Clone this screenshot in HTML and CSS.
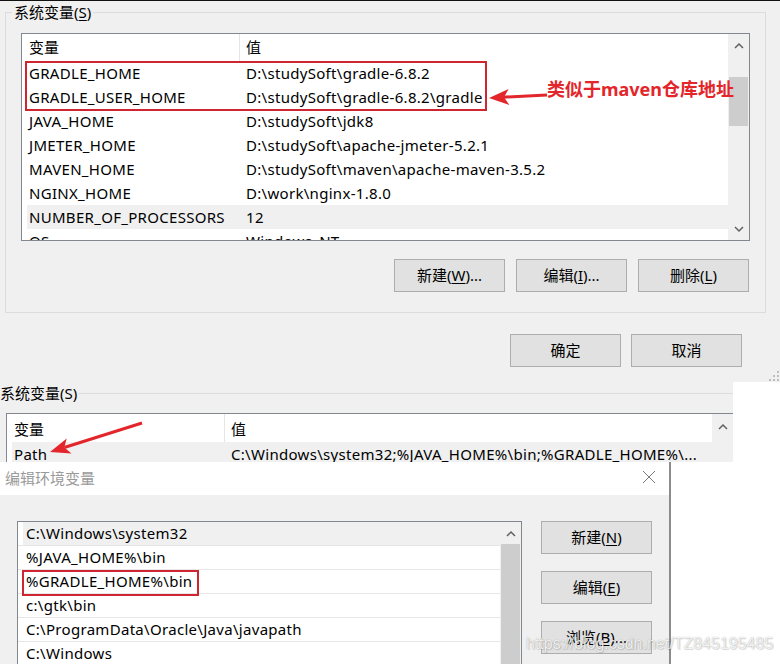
FILE: index.html
```html
<!DOCTYPE html>
<html lang="zh-CN">
<head>
<meta charset="utf-8">
<title>系统变量</title>
<link rel="stylesheet" href="styles.css">
</head>
<body>
<section class="win1">
  <fieldset class="group">
    <legend>系统变量(<u>S</u>)</legend>
    <div class="gbody">
      <div class="listbox lb1">
        <div class="lv">
          <div class="lhead"><span class="c1">变量</span><span class="c2">值</span></div>
          <div class="lrow"><span class="c1">GRADLE_HOME</span><span class="c2">D:\studySoft\gradle-6.8.2</span></div>
          <div class="lrow"><span class="c1">GRADLE_USER_HOME</span><span class="c2">D:\studySoft\gradle-6.8.2\gradle</span></div>
          <div class="lrow"><span class="c1">JAVA_HOME</span><span class="c2">D:\studySoft\jdk8</span></div>
          <div class="lrow"><span class="c1">JMETER_HOME</span><span class="c2">D:\studySoft\apache-jmeter-5.2.1</span></div>
          <div class="lrow"><span class="c1">MAVEN_HOME</span><span class="c2">D:\studySoft\maven\apache-maven-3.5.2</span></div>
          <div class="lrow"><span class="c1">NGINX_HOME</span><span class="c2">D:\work\nginx-1.8.0</span></div>
          <div class="lrow hl"><span class="c1">NUMBER_OF_PROCESSORS</span><span class="c2">12</span></div>
          <div class="lrow"><span class="c1">OS</span><span class="c2">Windows_NT</span></div>
        </div>
        <div class="vscroll">
          <div class="sbtn"><svg width="10" height="7" viewBox="0 0 10 7"><polyline points="1,6 5,2 9,6" fill="none" stroke="#606060" stroke-width="1.5"/></svg></div>
          <div class="track"><div class="thumb t1"></div></div>
          <div class="sbtn"><svg width="10" height="7" viewBox="0 0 10 7"><polyline points="1,1 5,5 9,1" fill="none" stroke="#606060" stroke-width="1.5"/></svg></div>
        </div>
      </div>
      <div class="btnrow">
        <div class="btn">新建(<u>W</u>)...</div>
        <div class="btn">编辑(<u>I</u>)...</div>
        <div class="btn">删除(<u>L</u>)</div>
      </div>
    </div>
  </fieldset>
  <div class="dlgbtns">
    <div class="btn">确定</div>
    <div class="btn">取消</div>
  </div>
</section>

<section class="win2">
  <div class="g2head"><span class="g2label">系统变量(S)</span><span class="g2line"></span></div>
  <div class="listbox lb2">
    <div class="lv">
      <div class="lhead lhead2"><span class="c1">变量</span><span class="c2">值</span></div>
      <div class="lrow hl"><span class="c1">Path</span><span class="c2">C:\Windows\system32;%JAVA_HOME%\bin;%GRADLE_HOME%\...</span></div>
    </div>
    <div class="vscroll">
      <div class="sbtn sbtn2"><svg width="10" height="7" viewBox="0 0 10 7"><polyline points="1,6 5,2 9,6" fill="none" stroke="#606060" stroke-width="1.5"/></svg></div>
      <div class="track"></div>
    </div>
  </div>
</section>

<section class="win3">
  <div class="titlebar">
    <span class="ttl">编辑环境变量</span>
    <svg class="closex" width="14" height="14" viewBox="0 0 14 14"><path d="M1 1 L13 13 M13 1 L1 13" stroke="#7a7a7a" stroke-width="1" fill="none"/></svg>
  </div>
  <div class="dbody">
    <div class="listbox lb3">
      <div class="lv3">
        <div class="r3 sel"><span class="t">C:\Windows\system32</span></div>
        <div class="r3"><span class="t">%JAVA_HOME%\bin</span></div>
        <div class="r3"><span class="t">%GRADLE_HOME%\bin</span></div>
        <div class="r3"><span class="t">c:\gtk\bin</span></div>
        <div class="r3"><span class="t">C:\ProgramData\Oracle\Java\javapath</span></div>
        <div class="r3"><span class="t">C:\Windows</span></div>
      </div>
      <div class="vscroll">
        <div class="sbtn"><svg width="10" height="7" viewBox="0 0 10 7"><polyline points="1,6 5,2 9,6" fill="none" stroke="#606060" stroke-width="1.5"/></svg></div>
        <div class="track"><div class="thumb t3"></div></div>
      </div>
    </div>
    <div class="btncol">
      <div class="btn">新建(<u>N</u>)</div>
      <div class="btn">编辑(<u>E</u>)</div>
      <div class="btn">浏览(<u>B</u>)...</div>
    </div>
  </div>
</section>

<div class="ov mark1"></div>
<svg class="ov arrow1" width="64" height="24" viewBox="0 0 64 24">
  <line x1="17" y1="11.2" x2="61" y2="9" stroke="#e3262b" stroke-width="3"/>
  <polygon points="3,12 23.4,18.9 18,11.2 22.6,3" fill="#e3262b"/>
</svg>
<div class="ov note1">类似于maven仓库地址</div>
<svg class="ov arrow2" width="110" height="48" viewBox="0 0 110 48">
  <line x1="24.3" y1="34.5" x2="102" y2="10" stroke="#e3262b" stroke-width="3"/>
  <polygon points="10,39 31.5,40.6 24.3,34.5 26.7,25.4" fill="#e3262b"/>
</svg>
<div class="ov mark3"></div>
<svg class="ov grip" width="10" height="10" viewBox="0 0 10 10">
  <rect x="8" y="0" width="2" height="2" fill="#bdbdbd"/>
  <rect x="4" y="4" width="2" height="2" fill="#bdbdbd"/>
  <rect x="8" y="4" width="2" height="2" fill="#bdbdbd"/>
  <rect x="0" y="8" width="2" height="2" fill="#bdbdbd"/>
  <rect x="4" y="8" width="2" height="2" fill="#bdbdbd"/>
  <rect x="8" y="8" width="2" height="2" fill="#bdbdbd"/>
</svg>
<div class="ov wm">https://blog.csdn.net/TZ845195485</div>
</body>
</html>
```
FILE: styles.css
```css
* { box-sizing: border-box; margin: 0; padding: 0; }
html, body { width: 780px; height: 664px; overflow: hidden; }
body {
  position: relative;
  background: #fff;
  font-family: "Noto Sans", "Noto Sans CJK SC", sans-serif;
  font-size: 15px;
  color: #000;
}
u { text-decoration: underline; text-underline-offset: 2px; text-decoration-thickness: 1px; }

/* ---------- window 1 ---------- */
.win1 {
  height: 382px;
  background: #f0f0f0;
  border-top: 1px solid #111;
  padding-top: 2px;
}
.group {
  margin-left: 5px;
  width: 761px;
  border: 1px solid #dcdcdc;
  min-width: 0;
}
.group legend {
  margin-left: 6px;
  padding: 0 2px;
  line-height: 18px;
}
.gbody { padding: 12px 15px 20px 15px; }

.listbox {
  display: flex;
  background: #fff;
  border: 1px solid #828790;
  overflow: hidden;
}
.lb1 { width: 729px; height: 208px; }
.lv { flex: 1; min-width: 0; overflow: hidden; }
.lhead, .lrow {
  display: flex;
  margin-left: 5px;
  white-space: nowrap;
}
.lhead { height: 27px; line-height: 27px; }
.lrow { height: 24px; line-height: 24px; letter-spacing: 0.3px; }
.c1 { width: 213px; flex: none; padding-left: 2px; overflow: hidden; }
.c2 { flex: 1; padding-left: 6px; overflow: hidden; }
.lhead .c1 { border-right: 1px solid #e5e5e5; }
.hl { background: #f0f0f0; }

.vscroll {
  width: 21px;
  flex: none;
  background: #f0f0f0;
  display: flex;
  flex-direction: column;
}
.sbtn {
  height: 22px;
  flex: none;
  display: flex;
  align-items: center;
  justify-content: center;
}
.sbtn svg { display: block; }
.track { flex: 1; padding: 0 1px; overflow: hidden; }
.thumb { background: #cdcdcd; }
.t1 { margin-top: 21px; height: 49px; }

.btn {
  width: 111px;
  height: 33px;
  flex: none;
  background: #e1e1e1;
  border: 1px solid #adadad;
  display: flex;
  align-items: center;
  justify-content: center;
  line-height: 1;
  white-space: nowrap;
}
.btnrow {
  display: flex;
  justify-content: flex-end;
  gap: 11px;
  margin-top: 18px;
  padding-right: 1px;
}
.dlgbtns {
  display: flex;
  justify-content: flex-end;
  gap: 10px;
  margin-top: 21px;
  padding-right: 38px;
}

/* ---------- window 2 ---------- */
.win2 {
  width: 733px;
  height: 80px;
  background: #f0f0f0;
  overflow: hidden;
}
.g2head { display: flex; align-items: center; height: 22px; }
.g2label { line-height: 22px; }
.g2line { flex: 1; height: 1px; background: #dcdcdc; margin-left: 2px; }
.lb2 {
  margin: 9px 0 0 6px;
  width: 727px;
  height: 60px;
  border-right: 0;
  border-bottom: 0;
}
.lhead2 { height: 28px; line-height: 31px; }
.sbtn2 { height: 25px; }

/* ---------- window 3 ---------- */
.win3 {
  width: 671px;
  height: 202px;
  border-right: 2px solid #8c8c8c;
  display: flex;
  flex-direction: column;
}
.titlebar {
  height: 33px;
  flex: none;
  background: #fff;
  display: flex;
  align-items: center;
  justify-content: space-between;
  padding: 0 13px 3px 5px;
}
.ttl { color: #9a9a9a; }
.closex { display: block; }
.dbody {
  flex: 1;
  background: #f0f0f0;
  display: flex;
  align-items: flex-start;
  gap: 19px;
  padding: 26px 0 0 17px;
  overflow: hidden;
}
.lb3 { width: 505px; height: 200px; flex: none; }
.lv3 { flex: 1; min-width: 0; }
.r3 { height: 24px; border-bottom: 1px solid #e6e6e6; white-space: nowrap; letter-spacing: 0.3px; }
.r3 .t {
  display: block;
  margin-left: 5px;
  padding-left: 3px;
  height: 23px;
  line-height: 23px;
}
.r3.sel .t { background: #f0f0f0; }
.t3 { height: 200px; }
.btncol { display: flex; flex-direction: column; gap: 17px; }

/* ---------- overlays (annotations) ---------- */
.ov { position: absolute; }
.mark1 { left: 25px; top: 61px; width: 462px; height: 50px; border: 2px solid #cf2530; }
.mark3 { left: 22px; top: 570px; width: 177px; height: 26px; border: 2px solid #cf2530; }
.arrow1 { left: 486px; top: 86px; }
.arrow2 { left: 40px; top: 413px; }
.note1 {
  left: 547px;
  top: 77px;
  font-weight: 700;
  font-size: 18px;
  line-height: 24px;
  color: #e3262b;
  white-space: nowrap;
}
.grip { left: 769px; top: 371px; }
.wm {
  left: 526px;
  top: 634px;
  font-family: "Liberation Sans", sans-serif;
  font-size: 16px;
  line-height: 20px;
  color: rgba(255, 255, 255, 0.85);
  text-shadow: 0 0 1px rgba(0, 0, 0, 0.35), 1px 1px 1px rgba(0, 0, 0, 0.12);
  white-space: nowrap;
}
```
